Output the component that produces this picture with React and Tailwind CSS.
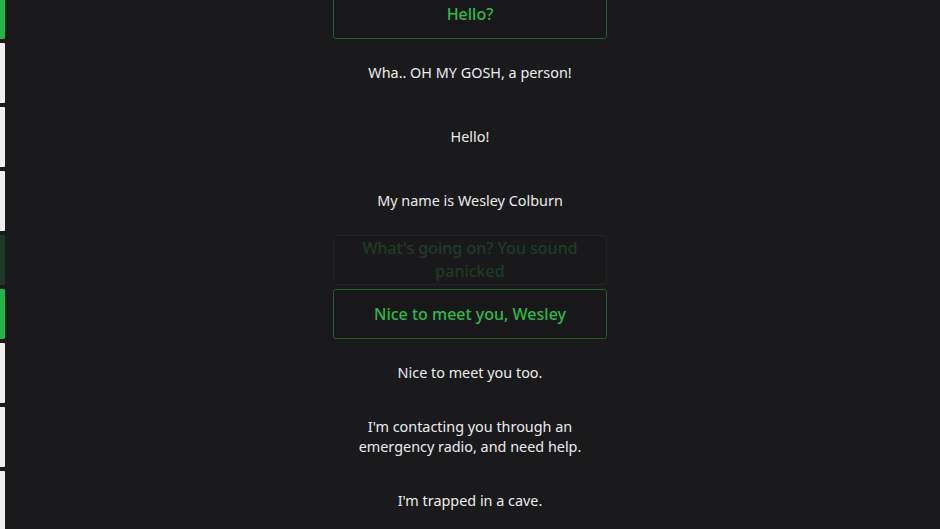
const messages = [
  { type: 'choice', text: 'Hello?' },
  { type: 'text', text: 'Wha.. OH MY GOSH, a person!' },
  { type: 'text', text: 'Hello!' },
  { type: 'text', text: 'My name is Wesley Colburn' },
  { type: 'skipped', text: "What's going on? You sound panicked" },
  { type: 'choice', text: 'Nice to meet you, Wesley' },
  { type: 'text', text: 'Nice to meet you too.' },
  { type: 'text', text: "I'm contacting you through an emergency radio, and need help." },
  { type: 'text', text: "I'm trapped in a cave." },
];

function Row({ msg }) {
  if (msg.type === 'text') {
    return (
      <div className="flex h-[60px] items-stretch">
        <div className="w-[5px] rounded-r-[1px] bg-[#efefef]" />
        <div className="flex flex-1 items-center justify-center pr-[5px]">
          <p className="w-[240px] text-center text-[14.4px] leading-[20px] text-[#ececec]">{msg.text}</p>
        </div>
      </div>
    );
  }

  const faded = msg.type === 'skipped';
  return (
    <div className={`flex h-[50px] items-stretch ${faded ? 'opacity-20' : ''}`}>
      <div className="w-[5px] rounded-r-[1px] bg-[#2bb34b]" />
      <div className="flex flex-1 items-center justify-center pr-[5px]">
        <button className="flex h-[50px] w-[274px] items-center justify-center rounded-[3px] border border-[#1f5d2d] bg-[#18181a] px-[18px] text-center text-[16px] font-medium leading-[23px] text-[#2fb84d]">
          {msg.text}
        </button>
      </div>
    </div>
  );
}

export default function App() {
  return (
    <div
      className="h-[529px] w-[940px] overflow-hidden bg-[#1a1a1c]"
      style={{ fontFamily: '"Noto Sans", "Open Sans", sans-serif' }}
    >
      <div className="-mt-[11px] flex flex-col gap-[4px]">
        {messages.map((m, i) => (
          <Row key={i} msg={m} />
        ))}
      </div>
    </div>
  );
}
